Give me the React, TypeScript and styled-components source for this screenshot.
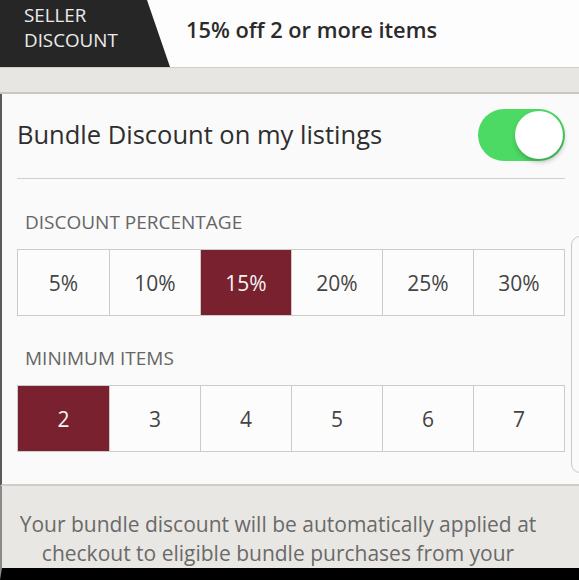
import React, { useState } from "react";
import styled, { createGlobalStyle } from "styled-components";

const GlobalStyle = createGlobalStyle`
  html, body {
    margin: 0;
    padding: 0;
    background: #000;
  }
  body {
    font-family: "Open Sans", Lato, sans-serif;
  }
`;

const Screen = styled.div`
  width: 579px;
  height: 580px;
  overflow: hidden;
  background: #000;
  display: flex;
  flex-direction: column;
`;

const Header = styled.div`
  height: 67px;
  display: flex;
  align-items: stretch;
  background: #fdfdfd;
  border-bottom: 1px solid #cfcdc8;
  flex-shrink: 0;
`;

const Tab = styled.div`
  width: 170px;
  background: #262626;
  clip-path: polygon(0 0, 147px 0, 170px 100%, 0 100%);
  color: #ececec;
  font-size: 18.8px;
  line-height: 25px;
  padding: 3px 0 0 24px;
  box-sizing: border-box;
  text-transform: uppercase;
`;

const Headline = styled.div`
  padding-left: 16px;
  display: flex;
  align-items: center;
  padding-bottom: 8px;
  font-size: 21.8px;
  font-weight: 600;
  color: #2b2b2b;
`;

const Band = styled.div`
  height: 24px;
  background: #e8e6e2;
  border-bottom: 2px solid #c9c7c2;
  flex-shrink: 0;
`;

const Panel = styled.div`
  position: relative;
  height: 390px;
  background: #fafafa;
  border-left: 2px solid #5a5a5a;
  border-bottom: 2px solid #cfcdc8;
  padding: 0 14px 0 15px;
  flex-shrink: 0;
`;

const NextCardEdge = styled.div`
  position: absolute;
  right: -10px;
  top: 142px;
  width: 16px;
  height: 235px;
  border: 1.5px solid #c8c8c8;
  border-radius: 9px;
`;

const ToggleRow = styled.div`
  height: 84px;
  display: flex;
  align-items: center;
  justify-content: space-between;
  border-bottom: 1.5px solid #cfcfcf;
`;

const ToggleLabel = styled.span`
  font-size: 25.5px;
  color: #2e2e2e;
  padding-bottom: 4px;
`;

const Switch = styled.button<{ $on: boolean }>`
  position: relative;
  width: 87px;
  height: 52px;
  border: none;
  border-radius: 26px;
  background: ${(p) => (p.$on ? "#4cd964" : "#e5e5e5")};
  padding: 0;
  margin-bottom: 2px;
  cursor: pointer;
`;

const Knob = styled.span<{ $on: boolean }>`
  position: absolute;
  top: 2px;
  left: ${(p) => (p.$on ? "37px" : "2px")};
  width: 48px;
  height: 48px;
  border-radius: 50%;
  background: #fff;
  box-shadow: 1px 3px 5px rgba(0, 0, 0, 0.25);
`;

const SectionLabel = styled.div<{ $top: number }>`
  font-size: 19px;
  color: #666;
  text-transform: uppercase;
  padding-left: 8px;
  line-height: 20px;
  margin: ${(p) => p.$top}px 0 17px;
`;

const Options = styled.div`
  display: grid;
  grid-template-columns: repeat(6, 1fr);
  height: 67px;
  width: 548px;
  box-sizing: border-box;
  border: 1.5px solid #cbcbc8;
`;

const Option = styled.button<{ $selected: boolean }>`
  border: none;
  border-left: 1.5px solid #cbcbc8;
  &:first-child {
    border-left: none;
  }
  background: ${(p) => (p.$selected ? "#7a2130" : "#fcfcfc")};
  color: ${(p) => (p.$selected ? "#f4f4f4" : "#444")};
  font-family: "Open Sans", Lato, sans-serif;
  font-size: 21px;
  padding: 0;
  cursor: pointer;
`;

const Footer = styled.div`
  flex: 1;
  background: #e9e7e3;
  border-left: 2px solid #8a8a8a;
  text-align: center;
  font-size: 21px;
  line-height: 29px;
  color: #6a6a6a;
  padding: 24px 31px 0 6px;
  overflow: hidden;
  border-bottom: 12px solid #000;
`;

const percents = [5, 10, 15, 20, 25, 30];
const counts = [2, 3, 4, 5, 6, 7];

export default function App() {
  const [on, setOn] = useState(true);
  const [percent, setPercent] = useState(15);
  const [count, setCount] = useState(2);

  return (
    <Screen>
      <GlobalStyle />
      <Header>
        <Tab>
          Seller
          <br />
          Discount
        </Tab>
        <Headline>
          {percent}% off {count} or more items
        </Headline>
      </Header>
      <Band />
      <Panel>
        <NextCardEdge />
        <ToggleRow>
          <ToggleLabel>Bundle Discount on my listings</ToggleLabel>
          <Switch $on={on} onClick={() => setOn(!on)}>
            <Knob $on={on} />
          </Switch>
        </ToggleRow>
        <SectionLabel $top={33}>Discount Percentage</SectionLabel>
        <Options>
          {percents.map((p) => (
            <Option key={p} $selected={p === percent} onClick={() => setPercent(p)}>
              {p}%
            </Option>
          ))}
        </Options>
        <SectionLabel $top={32}>Minimum Items</SectionLabel>
        <Options>
          {counts.map((c) => (
            <Option key={c} $selected={c === count} onClick={() => setCount(c)}>
              {c}
            </Option>
          ))}
        </Options>
      </Panel>
      <Footer>
        Your bundle discount will be automatically applied at checkout to
        eligible bundle purchases from your closet.
      </Footer>
    </Screen>
  );
}
